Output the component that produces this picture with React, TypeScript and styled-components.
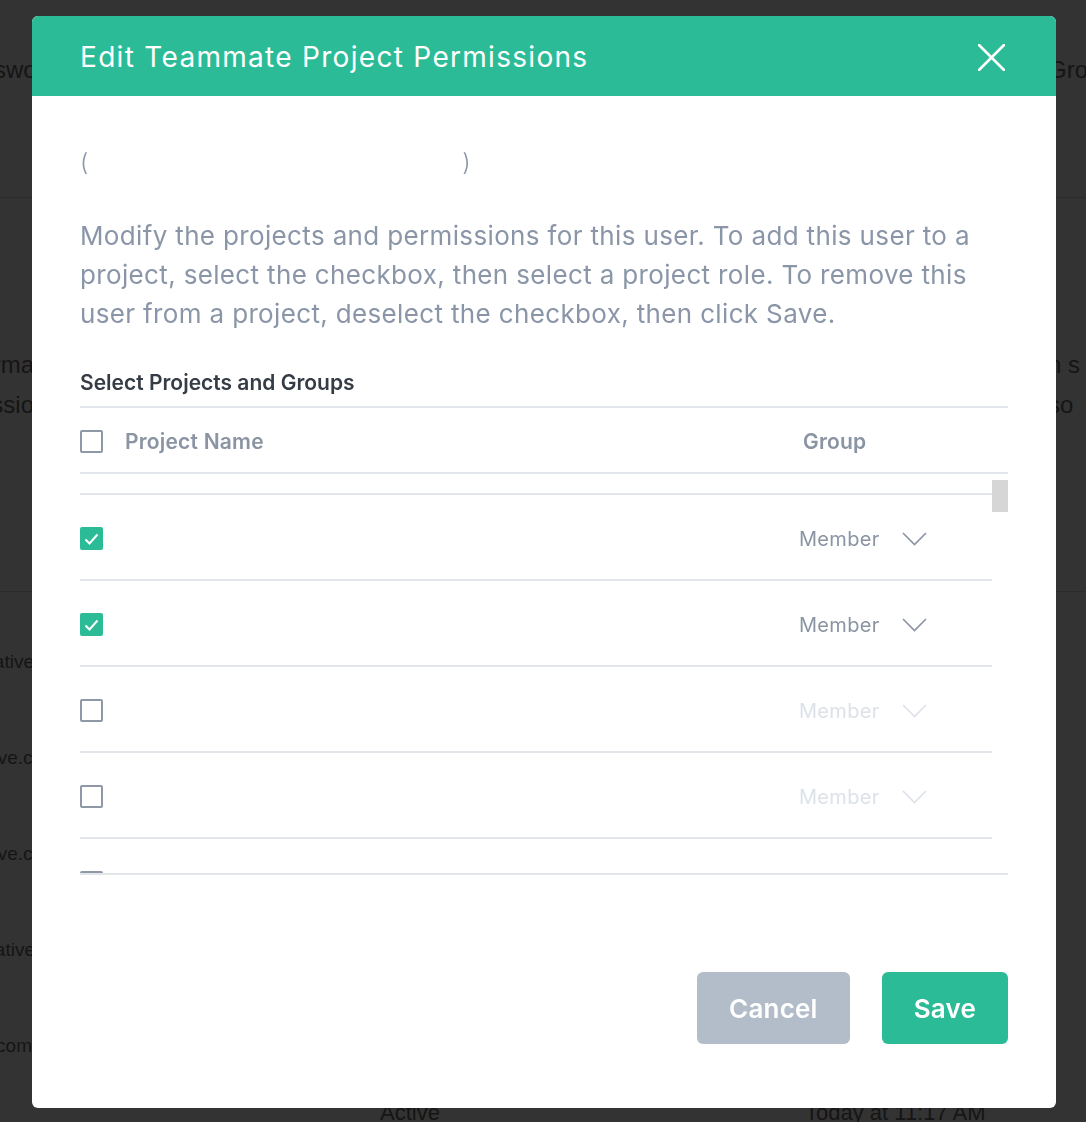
import React, { useLayoutEffect, useRef } from "react";
import styled, { createGlobalStyle } from "styled-components";

const GlobalStyle = createGlobalStyle`
  * { box-sizing: border-box; }
  html, body {
    margin: 0;
    padding: 0;
    height: 100%;
    overflow: hidden;
  }
  body {
    font-family: Inter, "Liberation Sans", Arial, sans-serif;
    background: #ffffff;
  }
`;

const GREEN = "#2bbc97";
const GRAY_TEXT = "#8a96a8";
const LINE = "#e2e6eb";

/* ---------- page behind the dialog ---------- */

const BackPage = styled.div`
  height: 1122px;
  display: flex;
  flex-direction: column;
  background: #ffffff;
  color: #6a6a6a;
  font-family: "Liberation Sans", Arial, sans-serif;
`;

const BackRow = styled.div<{ $h: number; $line?: boolean; $top?: number }>`
  height: ${(p) => p.$h}px;
  flex-shrink: 0;
  display: flex;
  justify-content: space-between;
  align-items: ${(p) => (p.$top !== undefined ? "flex-start" : "center")};
  padding-top: ${(p) => p.$top ?? 0}px;
  border-bottom: ${(p) => (p.$line ? "1px solid #d8d8d8" : "none")};
`;

const BackLeft = styled.div<{ $size: number; $w: number }>`
  width: ${(p) => p.$w}px;
  overflow: hidden;
  display: flex;
  flex-direction: column;
  align-items: flex-end;
  white-space: nowrap;
  font-size: ${(p) => p.$size}px;
  line-height: 40px;
`;

const BackRight = styled.div<{ $size: number }>`
  width: 38px;
  overflow: hidden;
  white-space: nowrap;
  font-size: ${(p) => p.$size}px;
  line-height: 40px;
`;

const BackFoot = styled.div`
  display: grid;
  grid-template-columns: 380px 425px 1fr;
  font-size: 22px;
  padding-top: 6px;
  & > span:first-child {
    visibility: hidden;
  }
`;

/* ---------- dialog ---------- */

const Overlay = styled.div`
  position: fixed;
  inset: 0;
  background: rgba(0, 0, 0, 0.8);
  padding: 16px 30px 0 32px;
`;

const Modal = styled.div`
  width: 1024px;
  background: #ffffff;
  border-radius: 6px;
  overflow: hidden;
  display: flex;
  flex-direction: column;
`;

const Header = styled.div`
  height: 80px;
  background: ${GREEN};
  display: flex;
  align-items: center;
  justify-content: space-between;
  padding: 2px 51px 0 48px;
`;

const Title = styled.h2`
  margin: 0;
  color: #ffffff;
  font-size: 28px;
  font-weight: 400;
  letter-spacing: 1.3px;
`;

const CloseButton = styled.button`
  width: 27px;
  height: 27px;
  padding: 0;
  border: none;
  background: none;
  cursor: pointer;
  display: flex;
`;

const Body = styled.div`
  padding: 51px 48px 64px;
  display: flex;
  flex-direction: column;
`;

const UserLine = styled.div`
  font-size: 24px;
  line-height: 32px;
  color: ${GRAY_TEXT};
  font-weight: 300;
`;

const Redacted = styled.span`
  display: inline-block;
  width: 374px;
`;

const Intro = styled.p`
  margin: 37px 0 0;
  font-size: 26px;
  line-height: 39px;
  color: ${GRAY_TEXT};
  letter-spacing: 0.35px;
`;

const SectionLabel = styled.div`
  margin-top: 38px;
  margin-bottom: 11px;
  font-size: 21px;
  line-height: 24px;
  font-weight: 600;
  color: #363c45;
`;

const HeadRow = styled.div`
  height: 68px;
  padding-top: 2px;
  border-top: 2px solid ${LINE};
  border-bottom: 2px solid ${LINE};
  display: grid;
  grid-template-columns: 23px 1fr 205px;
  column-gap: 22px;
  align-items: center;
`;

const HeadCell = styled.div`
  font-size: 21px;
  font-weight: 600;
  letter-spacing: 0.2px;
  color: #8a94a3;
`;

const ListFrame = styled.div`
  height: 401px;
  display: flex;
  border-bottom: 2px solid ${LINE};
`;

const ListScroll = styled.div`
  flex: 1;
  overflow: hidden;
`;

const ScrollTrack = styled.div`
  width: 16px;
  flex-shrink: 0;
  padding-top: 6px;
`;

const ScrollThumb = styled.div`
  height: 32px;
  background: #d6d6d6;
`;

const Row = styled.div`
  height: 86px;
  padding-top: 3px;
  border-bottom: 2px solid ${LINE};
  display: flex;
  align-items: center;
  gap: 22px;
`;

const Box = styled.span<{ $checked?: boolean }>`
  width: 23px;
  height: 23px;
  flex-shrink: 0;
  border-radius: 2px;
  border: ${(p) => (p.$checked ? "none" : "2px solid #8e98a6")};
  background: ${(p) => (p.$checked ? GREEN : "#ffffff")};
  display: flex;
  align-items: center;
  justify-content: center;
`;

const ProjectName = styled.span`
  flex: 1;
  font-size: 20px;
  color: #363c45;
`;

const RoleSelect = styled.div<{ $enabled: boolean }>`
  width: 193px;
  display: flex;
  align-items: center;
  gap: 23px;
  font-size: 20px;
  letter-spacing: 0.3px;
  color: ${(p) => (p.$enabled ? "#8a94a3" : "#dde2e8")};
`;

const Footer = styled.div`
  margin-top: 97px;
  display: flex;
  justify-content: flex-end;
  gap: 32px;
`;

const Button = styled.button<{ $variant?: "cancel" | "save" }>`
  height: 72px;
  padding: 0 32px;
  border: none;
  border-radius: 6px;
  background: ${(p) => (p.$variant === "cancel" ? "#b3bdc9" : GREEN)};
  color: #ffffff;
  font-family: inherit;
  font-size: 26px;
  font-weight: 600;
  letter-spacing: 0.2px;
  cursor: pointer;
`;

/* ---------- icons ---------- */

const CloseIcon = () => (
  <svg width="27" height="27" viewBox="0 0 27 27">
    <path d="M1 1L26 26M26 1L1 26" stroke="#fff" strokeWidth="2.6" strokeLinecap="round" />
  </svg>
);

const CheckIcon = () => (
  <svg width="15" height="12" viewBox="0 0 15 12">
    <path d="M1.5 6.5L5.5 10.5L13.5 1.5" stroke="#fff" strokeWidth="2" fill="none" />
  </svg>
);

const Chevron = ({ color }: { color: string }) => (
  <svg width="25" height="14" viewBox="0 0 25 14">
    <path d="M1 1L12.5 12.5L24 1" stroke={color} strokeWidth="1.6" fill="none" />
  </svg>
);

const Checkbox = ({ checked }: { checked?: boolean }) => (
  <Box $checked={checked}>{checked && <CheckIcon />}</Box>
);

/* ---------- data ---------- */

const projects = Array.from({ length: 58 }, (_, i) => ({
  id: i,
  name: "",
  checked: i <= 2,
}));

export default function App() {
  const listRef = useRef<HTMLDivElement>(null);

  useLayoutEffect(() => {
    if (listRef.current) listRef.current.scrollTop = 65;
  }, []);

  return (
    <>
      <GlobalStyle />
      <BackPage>
        <BackRow $h={198} $top={50} $line>
          <BackLeft $size={24} $w={58}>Password</BackLeft>
          <BackRight $size={24}>Group</BackRight>
        </BackRow>
        <BackRow $h={122} />
        <BackRow $h={272} $top={25} $line>
          <BackLeft $size={24} $w={34}>
            <span>Informa</span>
            <span>Permissio</span>
          </BackLeft>
          <BackRight $size={24}>
            <span>n s</span>
            <br />
            <span>so</span>
          </BackRight>
        </BackRow>
        <BackRow $h={22} />
        <BackRow $h={96}>
          <BackLeft $size={19} $w={34}>Administrative</BackLeft>
        </BackRow>
        <BackRow $h={96}>
          <BackLeft $size={19} $w={59}>user@creative.com</BackLeft>
        </BackRow>
        <BackRow $h={96}>
          <BackLeft $size={19} $w={59}>team@creative.com</BackLeft>
        </BackRow>
        <BackRow $h={96}>
          <BackLeft $size={19} $w={35}>Collaborative</BackLeft>
        </BackRow>
        <BackRow $h={96}>
          <BackLeft $size={19} $w={32}>name@example.com</BackLeft>
        </BackRow>
        <BackFoot>
          <span>-</span>
          <span>Active</span>
          <span>Today at 11:17 AM</span>
        </BackFoot>
      </BackPage>

      <Overlay>
        <Modal>
          <Header>
            <Title>Edit Teammate Project Permissions</Title>
            <CloseButton aria-label="Close">
              <CloseIcon />
            </CloseButton>
          </Header>
          <Body>
            <UserLine>
              (<Redacted />)
            </UserLine>
            <Intro>
              Modify the projects and permissions for this user. To add this user to a
              project, select the checkbox, then select a project role. To remove this
              user from a project, deselect the checkbox, then click Save.
            </Intro>
            <SectionLabel>Select Projects and Groups</SectionLabel>
            <HeadRow>
              <Checkbox />
              <HeadCell>Project Name</HeadCell>
              <HeadCell>Group</HeadCell>
            </HeadRow>
            <ListFrame>
              <ListScroll ref={listRef}>
                {projects.map((p) => (
                  <Row key={p.id}>
                    <Checkbox checked={p.checked} />
                    <ProjectName>{p.name}</ProjectName>
                    <RoleSelect $enabled={p.checked}>
                      Member
                      <Chevron color={p.checked ? "#8a94a3" : "#dde2e8"} />
                    </RoleSelect>
                  </Row>
                ))}
              </ListScroll>
              <ScrollTrack>
                <ScrollThumb />
              </ScrollTrack>
            </ListFrame>
            <Footer>
              <Button $variant="cancel">Cancel</Button>
              <Button $variant="save">Save</Button>
            </Footer>
          </Body>
        </Modal>
      </Overlay>
    </>
  );
}
